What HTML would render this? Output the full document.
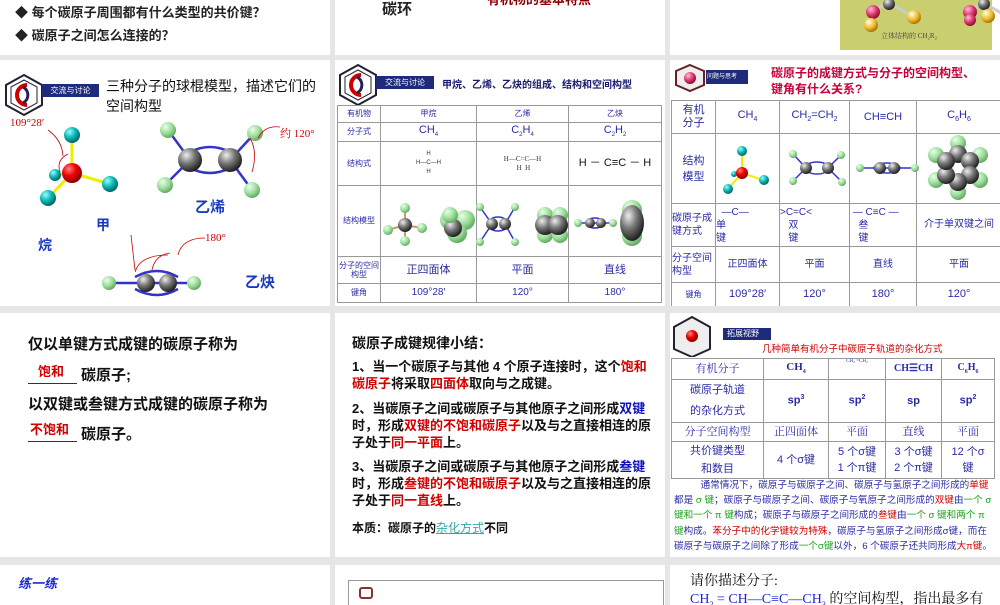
<!DOCTYPE html>
<html><head><meta charset="utf-8">
<style>
*{margin:0;padding:0;box-sizing:border-box}
body{width:1000px;height:600px;background:#e6e6e6;position:relative;overflow:hidden;font-family:"Liberation Sans","Noto Sans CJK SC",sans-serif;color:#111}
.p{position:absolute;background:#fff;overflow:hidden}
.a{position:absolute;white-space:nowrap}
.b{font-weight:bold}
table{border-collapse:collapse;position:absolute;table-layout:fixed}
td{border:1px solid #999;text-align:center;vertical-align:middle;color:#2a2aa8;overflow:hidden;line-height:1.15}
.r{color:#d00000}.bl{color:#1010c0}.g{color:#18a018}
svg{position:absolute;left:0;top:0}
</style></head><body>
<svg width="0" height="0" style="position:absolute">
<defs>
<radialGradient id="gG" cx=".35" cy=".3" r=".7"><stop offset="0" stop-color="#eee"/><stop offset=".5" stop-color="#777"/><stop offset="1" stop-color="#222"/></radialGradient>
<radialGradient id="gR" cx=".35" cy=".3" r=".7"><stop offset="0" stop-color="#ff8080"/><stop offset=".5" stop-color="#e00"/><stop offset="1" stop-color="#800"/></radialGradient>
<radialGradient id="gT" cx=".35" cy=".3" r=".7"><stop offset="0" stop-color="#9ff"/><stop offset=".5" stop-color="#1bb"/><stop offset="1" stop-color="#066"/></radialGradient>
<radialGradient id="gL" cx=".35" cy=".3" r=".7"><stop offset="0" stop-color="#e8ffe8"/><stop offset=".6" stop-color="#9d9"/><stop offset="1" stop-color="#6a6"/></radialGradient>
<radialGradient id="gY" cx=".35" cy=".3" r=".7"><stop offset="0" stop-color="#ffd"/><stop offset=".6" stop-color="#eb3"/><stop offset="1" stop-color="#a70"/></radialGradient>
<radialGradient id="gP" cx=".35" cy=".3" r=".7"><stop offset="0" stop-color="#fbd"/><stop offset=".6" stop-color="#d36"/><stop offset="1" stop-color="#813"/></radialGradient>
</defs></svg>

<!-- Row 1 -->
<div class="p" style="left:0;top:0;width:330px;height:55px">
<div class="a b" style="left:15px;top:2px;font-size:13px;color:#222">◆ 每个碳原子周围都有什么类型的共价键？</div>
<div class="a b" style="left:15px;top:25px;font-size:13px;color:#222">◆ 碳原子之间怎么连接的？</div>
</div>
<div class="p" style="left:335px;top:0;width:330px;height:55px">
<div class="a b" style="left:47px;top:-2px;font-size:15px;color:#222">碳环</div>
<div class="a b" style="left:152px;top:-11px;font-size:13px;color:#8b0000">有机物的基本特点</div>
</div>
<div class="p" style="left:670px;top:0;width:330px;height:55px">
<div class="a" style="left:170px;top:0;width:152px;height:50px;background:#c9cf6e"></div>
<svg width="330" height="55">
<line x1="203" y1="10" x2="219" y2="3" stroke="#ccc" stroke-width="3"/><line x1="219" y1="3" x2="244" y2="17" stroke="#ccc" stroke-width="3"/>
<line x1="300" y1="10" x2="314" y2="3" stroke="#ccc" stroke-width="3"/><line x1="314" y1="3" x2="338" y2="17" stroke="#ccc" stroke-width="3"/>
<circle cx="203" cy="12" r="7" fill="url(#gP)"/><circle cx="201" cy="25" r="7" fill="url(#gY)"/><circle cx="219" cy="4" r="6" fill="url(#gG)"/><circle cx="244" cy="17" r="7" fill="url(#gY)"/>
<circle cx="300" cy="12" r="7" fill="url(#gP)"/><circle cx="300" cy="20" r="6" fill="url(#gP)"/><circle cx="314" cy="4" r="6" fill="url(#gG)"/><circle cx="318" cy="16" r="7" fill="url(#gY)"/>
</svg>
<div class="a" style="left:211px;top:31px;font-size:7px;color:#444;font-family:'Liberation Serif','Noto Serif CJK SC',serif">立体结构的 CH₂R₂</div>
</div>

<!-- Row 2 -->
<div class="p" style="left:0;top:60px;width:330px;height:246px">
<svg width="42" height="44" style="left:3px;top:13px"><polygon points="21,2 39,12 39,32 21,42 3,32 3,12" fill="#fff" stroke="#223" stroke-width="2"/><polygon points="21,7 34,14 34,30 21,37 8,30 8,14" fill="none" stroke="#223" stroke-width="1"/><path d="M24 12 A10 10 0 1 0 24 32" fill="none" stroke="#c00" stroke-width="4"/><path d="M20 14 A9 9 0 0 1 20 30" fill="none" stroke="#225" stroke-width="3"/></svg>
<div class="a" style="left:42px;top:24px;width:57px;height:13px;background:#1e2a7a;color:#fff;font-size:8px;text-align:center;line-height:13px">交流与讨论</div>
<div class="a" style="left:106px;top:16px;font-size:14px;line-height:20px;color:#111;white-space:normal;width:222px">三种分子的球棍模型，描述它们的空间构型</div>
<svg width="330" height="246">
<g stroke="#ee0" stroke-width="3"><line x1="72" y1="113" x2="72" y2="75"/><line x1="72" y1="113" x2="110" y2="124"/><line x1="72" y1="113" x2="48" y2="138"/><line x1="72" y1="113" x2="55" y2="115"/></g>
<circle cx="55" cy="115" r="6" fill="url(#gT)"/><circle cx="72" cy="75" r="8" fill="url(#gT)"/><circle cx="110" cy="124" r="8" fill="url(#gT)"/><circle cx="48" cy="138" r="8" fill="url(#gT)"/><circle cx="72" cy="113" r="10" fill="url(#gR)"/>
<path d="M48 70 Q62 80 63 96" fill="none" stroke="#c00" stroke-width=".8"/><path d="M60 112 Q56 100 68 94" fill="none" stroke="#c00" stroke-width=".8"/>
<g stroke="#33c" stroke-width="2.5" fill="none"><line x1="168" y1="70" x2="190" y2="100"/><line x1="255" y1="73" x2="230" y2="100"/><line x1="165" y1="125" x2="190" y2="100"/><line x1="252" y1="130" x2="230" y2="100"/><path d="M190 92 Q210 82 230 92"/><path d="M190 108 Q210 118 230 108"/></g>
<circle cx="168" cy="70" r="8" fill="url(#gL)"/><circle cx="255" cy="73" r="8" fill="url(#gL)"/><circle cx="165" cy="125" r="8" fill="url(#gL)"/><circle cx="252" cy="130" r="8" fill="url(#gL)"/>
<circle cx="190" cy="100" r="12" fill="url(#gG)"/><circle cx="230" cy="100" r="12" fill="url(#gG)"/>
<path d="M250 78 Q258 92 252 112" fill="none" stroke="#c00" stroke-width=".8"/><path d="M258 78 Q265 65 280 67" fill="none" stroke="#c00" stroke-width=".8"/>
<g stroke="#33c" stroke-width="2.5" fill="none"><line x1="109" y1="223" x2="194" y2="223"/><path d="M135 217 Q157 205 178 217"/><path d="M135 229 Q157 241 178 229"/></g>
<circle cx="109" cy="223" r="7" fill="url(#gL)"/><circle cx="194" cy="223" r="7" fill="url(#gL)"/><circle cx="146" cy="223" r="9" fill="url(#gG)"/><circle cx="168" cy="223" r="9" fill="url(#gG)"/>
<path d="M131 175 L135 210" stroke="#c00" stroke-width=".8" fill="none"/><path d="M135 212 Q140 195 168 195 M152 210 Q155 195 170 193" stroke="#c00" stroke-width=".8" fill="none"/><path d="M178 195 Q182 178 205 178" stroke="#c00" stroke-width=".8" fill="none"/>
</svg>
<div class="a" style="left:10px;top:57px;font-size:11px;color:#c00;font-family:'Liberation Serif',serif">109°28′</div>
<div class="a" style="left:280px;top:65px;font-size:11px;color:#c00;font-family:'Liberation Serif','Noto Serif CJK SC',serif">约 120°</div>
<div class="a" style="left:205px;top:172px;font-size:11px;color:#c00;font-family:'Liberation Serif',serif">180°</div>
<div class="a b" style="left:195px;top:136px;font-size:15px;color:#1a3ac0">乙烯</div>
<div class="a b" style="left:96px;top:155px;font-size:14px;color:#1a3ac0">甲</div>
<div class="a b" style="left:38px;top:175px;font-size:14px;color:#1a3ac0">烷</div>
<div class="a b" style="left:245px;top:211px;font-size:15px;color:#1a3ac0">乙炔</div>
</div>

<div class="p" style="left:335px;top:60px;width:330px;height:246px">
<svg width="42" height="44" style="left:2px;top:3px"><polygon points="21,2 39,12 39,32 21,42 3,32 3,12" fill="#fff" stroke="#223" stroke-width="2"/><polygon points="21,7 34,14 34,30 21,37 8,30 8,14" fill="none" stroke="#223" stroke-width="1"/><path d="M24 12 A10 10 0 1 0 24 32" fill="none" stroke="#c00" stroke-width="4"/><path d="M20 14 A9 9 0 0 1 20 30" fill="none" stroke="#225" stroke-width="3"/></svg>
<div class="a" style="left:41px;top:16px;width:58px;height:13px;background:#1e2a7a;color:#fff;font-size:8px;text-align:center;line-height:13px">交流与讨论</div>
<div class="a b" style="left:107px;top:16px;font-size:10px;color:#1a1a6e">甲烷、乙烯、乙炔的组成、结构和空间构型</div>
<table style="left:2px;top:45px;width:324px;height:197px;font-size:8px">
<colgroup><col style="width:43px"><col style="width:96px"><col style="width:92px"><col style="width:93px"></colgroup>
<tr style="height:17px"><td>有机物</td><td>甲烷</td><td>乙烯</td><td>乙炔</td></tr>
<tr style="height:19px;font-size:11px"><td style="font-size:8px">分子式</td><td>CH<sub style="font-size:6px">4</sub></td><td>C<sub style="font-size:6px">2</sub>H<sub style="font-size:6px">4</sub></td><td>C<sub style="font-size:6px">2</sub>H<sub style="font-size:6px">2</sub></td></tr>
<tr style="height:44px"><td>结构式</td><td style="color:#333;font-size:6px;line-height:9px">H<br>H—C—H<br>H</td><td style="color:#333;font-size:7px;font-family:'Liberation Serif',serif">H—C=C—H<br>&nbsp;H&nbsp;&nbsp;H</td><td style="color:#111;font-size:11px">H － C≡C － H</td></tr>
<tr style="height:71px"><td>结构模型</td><td></td><td></td><td></td></tr>
<tr style="height:27px;font-size:11px"><td style="font-size:8px">分子的空间构型</td><td>正四面体</td><td>平面</td><td>直线</td></tr>
<tr style="height:19px;font-size:10px"><td style="font-size:8px">键角</td><td>109°28′</td><td>120°</td><td>180°</td></tr>
</table>
<svg width="330" height="246">
<g stroke="#c96" stroke-width="2"><line x1="70" y1="165" x2="70" y2="148"/><line x1="70" y1="165" x2="53" y2="170"/><line x1="70" y1="165" x2="87" y2="168"/><line x1="70" y1="165" x2="70" y2="180"/></g>
<circle cx="70" cy="148" r="5" fill="url(#gL)"/><circle cx="53" cy="170" r="5" fill="url(#gL)"/><circle cx="87" cy="168" r="5" fill="url(#gL)"/><circle cx="70" cy="181" r="5" fill="url(#gL)"/><circle cx="70" cy="165" r="7" fill="url(#gG)"/>
<circle cx="115" cy="160" r="10" fill="url(#gL)"/><circle cx="130" cy="160" r="10" fill="url(#gL)"/><circle cx="122" cy="173" r="10" fill="url(#gL)"/><circle cx="118" cy="168" r="9" fill="url(#gG)"/><circle cx="115" cy="155" r="8" fill="url(#gL)"/>
<g stroke="#33c" stroke-width="1.5" fill="none"><line x1="145" y1="147" x2="157" y2="164"/><line x1="180" y1="147" x2="170" y2="164"/><line x1="145" y1="182" x2="157" y2="164"/><line x1="180" y1="182" x2="170" y2="164"/><ellipse cx="163" cy="164" rx="10" ry="7"/></g>
<circle cx="145" cy="147" r="4" fill="url(#gL)"/><circle cx="180" cy="147" r="4" fill="url(#gL)"/><circle cx="145" cy="182" r="4" fill="url(#gL)"/><circle cx="180" cy="182" r="4" fill="url(#gL)"/><circle cx="157" cy="164" r="6" fill="url(#gG)"/><circle cx="170" cy="164" r="6" fill="url(#gG)"/>
<circle cx="210" cy="155" r="8" fill="url(#gL)"/><circle cx="225" cy="155" r="8" fill="url(#gL)"/><circle cx="210" cy="175" r="8" fill="url(#gL)"/><circle cx="225" cy="175" r="8" fill="url(#gL)"/><circle cx="210" cy="165" r="10" fill="url(#gG)"/><circle cx="223" cy="165" r="10" fill="url(#gG)"/>
<g stroke="#33c" stroke-width="1.5" fill="none"><line x1="243" y1="163" x2="278" y2="163"/><ellipse cx="260" cy="163" rx="9" ry="5"/></g>
<circle cx="243" cy="163" r="4" fill="url(#gL)"/><circle cx="278" cy="163" r="4" fill="url(#gL)"/><circle cx="255" cy="163" r="5" fill="url(#gG)"/><circle cx="266" cy="163" r="5" fill="url(#gG)"/>
<circle cx="297" cy="150" r="10" fill="url(#gL)"/><circle cx="297" cy="176" r="10" fill="url(#gL)"/><ellipse cx="297" cy="163" rx="12" ry="18" fill="url(#gG)"/>
</svg>
</div>

<div class="p" style="left:670px;top:60px;width:330px;height:246px">
<svg width="80" height="30" style="left:2px;top:3px"><polygon points="18,2 32,8 32,22 18,28 4,22 4,8" fill="#eee" stroke="#622" stroke-width="2"/><circle cx="18" cy="15" r="6" fill="url(#gP)"/><rect x="34" y="7" width="42" height="14" fill="#1e2a7a"/></svg>
<div class="a" style="left:37px;top:11px;font-size:6px;color:#fff">问题与思考</div>
<div class="a b" style="left:101px;top:5px;font-size:12px;line-height:16px;color:#c8003a">碳原子的成键方式与分子的空间构型、<br>键角有什么关系?</div>
<table style="left:1px;top:40px;width:330px;height:206px;font-size:11px">
<colgroup><col style="width:44px"><col style="width:64px"><col style="width:70px"><col style="width:67px"><col style="width:85px"></colgroup>
<tr style="height:33px"><td style="font-size:11px">有机<br>分子</td><td>CH<sub style="font-size:7px">4</sub></td><td>CH<sub style="font-size:7px">2</sub>=CH<sub style="font-size:7px">2</sub></td><td>CH≡CH</td><td>C<sub style="font-size:7px">6</sub>H<sub style="font-size:7px">6</sub></td></tr>
<tr style="height:70px"><td style="font-size:11px;line-height:16px">结构<br>模型</td><td></td><td></td><td></td><td></td></tr>
<tr style="height:43px"><td style="font-size:10px;text-align:left;line-height:13px">碳原子成键方式</td><td style="font-size:10px;text-align:left;line-height:13px">&nbsp;&nbsp;—C—<br>单<br>键</td><td style="font-size:10px;text-align:left;line-height:13px">&gt;C=C&lt;<br>&nbsp;&nbsp;&nbsp;双<br>&nbsp;&nbsp;&nbsp;键</td><td style="font-size:10px;text-align:left;line-height:13px">&nbsp;— C≡C —<br>&nbsp;&nbsp;&nbsp;叁<br>&nbsp;&nbsp;&nbsp;键</td><td style="font-size:10px">介于单双键之间</td></tr>
<tr style="height:36px;font-size:10px"><td style="text-align:left;line-height:13px">分子空间构型</td><td>正四面体</td><td>平面</td><td>直线</td><td>平面</td></tr>
<tr style="height:24px;font-size:11px"><td style="font-size:8px">键角</td><td>109°28′</td><td>120°</td><td>180°</td><td>120°</td></tr>
</table>
<svg width="330" height="246">
<g stroke="#ee0" stroke-width="2"><line x1="72" y1="113" x2="72" y2="92"/><line x1="72" y1="113" x2="93" y2="120"/><line x1="72" y1="113" x2="58" y2="129"/></g>
<circle cx="72" cy="91" r="5" fill="url(#gT)"/><circle cx="94" cy="120" r="5" fill="url(#gT)"/><circle cx="58" cy="129" r="5" fill="url(#gT)"/><circle cx="64" cy="114" r="3" fill="url(#gT)"/><circle cx="72" cy="113" r="6" fill="url(#gR)"/>
<g stroke="#33c" stroke-width="1.5" fill="none"><line x1="123" y1="94" x2="136" y2="108"/><line x1="171" y1="95" x2="158" y2="108"/><line x1="123" y1="121" x2="136" y2="108"/><line x1="172" y1="122" x2="158" y2="108"/><ellipse cx="147" cy="108" rx="12" ry="6"/></g>
<circle cx="123" cy="94" r="4" fill="url(#gL)"/><circle cx="171" cy="95" r="4" fill="url(#gL)"/><circle cx="123" cy="121" r="4" fill="url(#gL)"/><circle cx="172" cy="122" r="4" fill="url(#gL)"/><circle cx="136" cy="108" r="6" fill="url(#gG)"/><circle cx="158" cy="108" r="6" fill="url(#gG)"/>
<g stroke="#33c" stroke-width="1.5" fill="none"><line x1="190" y1="108" x2="245" y2="108"/><ellipse cx="217" cy="108" rx="13" ry="5"/></g>
<circle cx="190" cy="108" r="4" fill="url(#gL)"/><circle cx="245" cy="108" r="4" fill="url(#gL)"/><circle cx="210" cy="108" r="6" fill="url(#gG)"/><circle cx="224" cy="108" r="6" fill="url(#gG)"/>
<g fill="url(#gL)"><circle cx="288" cy="83" r="8"/><circle cx="310" cy="95" r="8"/><circle cx="310" cy="120" r="8"/><circle cx="288" cy="132" r="8"/><circle cx="266" cy="120" r="8"/><circle cx="266" cy="95" r="8"/></g>
<g fill="url(#gG)"><circle cx="288" cy="94" r="9"/><circle cx="300" cy="101" r="9"/><circle cx="300" cy="115" r="9"/><circle cx="288" cy="122" r="9"/><circle cx="276" cy="115" r="9"/><circle cx="276" cy="101" r="9"/></g>
</svg>
</div>

<!-- Row 3 -->
<div class="p" style="left:0;top:313px;width:330px;height:244px">
<div class="a b" style="left:28px;top:20px;font-size:15px">仅以单键方式成键的碳原子称为</div>
<div class="a b r" style="left:38px;top:48px;font-size:13px">饱和</div>
<div class="a" style="left:28px;top:70px;width:49px;border-top:1px solid #333"></div>
<div class="a b" style="left:81px;top:51px;font-size:15px">碳原子;</div>
<div class="a b" style="left:28px;top:80px;font-size:15px">以双键或叁键方式成键的碳原子称为</div>
<div class="a b r" style="left:30px;top:106px;font-size:13px">不饱和</div>
<div class="a" style="left:28px;top:128px;width:49px;border-top:1px solid #333"></div>
<div class="a b" style="left:81px;top:110px;font-size:15px">碳原子。</div>
</div>

<div class="p" style="left:335px;top:313px;width:330px;height:244px">
<div class="a b" style="left:17px;top:20px;font-size:14px">碳原子成键规律小结：</div>
<div class="a b" style="left:17px;top:45px;width:306px;white-space:normal;font-size:13px;line-height:17px">1、当一个碳原子与其他 4 个原子连接时，这个<span class="r">饱和碳原子</span>将采取<span class="r">四面体</span>取向与之成键。</div>
<div class="a b" style="left:17px;top:87px;width:306px;white-space:normal;font-size:13px;line-height:17px">2、当碳原子之间或碳原子与其他原子之间形成<span class="bl">双键</span>时，形成<span class="r">双键的不饱和碳原子</span>以及与之直接相连的原子处于<span class="r">同一平面</span>上。</div>
<div class="a b" style="left:17px;top:145px;width:306px;white-space:normal;font-size:13px;line-height:17px">3、当碳原子之间或碳原子与其他原子之间形成<span class="bl">叁键</span>时，形成<span class="r">叁键的不饱和碳原子</span>以及与之直接相连的原子处于<span class="r">同一直线</span>上。</div>
<div class="a b" style="left:17px;top:206px;font-size:12px">本质：碳原子的<span style="color:#3aa;text-decoration:underline;font-weight:normal">杂化方式</span>不同</div>
</div>

<div class="p" style="left:670px;top:313px;width:330px;height:244px">
<svg width="100" height="42" style="left:2px;top:2px"><polygon points="20,2 38,12 38,34 20,42 2,34 2,12" fill="#eee" stroke="#223" stroke-width="2"/><circle cx="20" cy="21" r="6" fill="url(#gR)"/><rect x="51" y="13" width="48" height="12" fill="#1e2a7a"/></svg>
<div class="a" style="left:57px;top:15px;font-size:8px;color:#fff">拓展视野</div>
<div class="a" style="left:92px;top:28px;font-size:9.5px;color:#d00000">几种简单有机分子中碳原子轨道的杂化方式</div>
<table style="left:1px;top:45px;width:323px;height:118px;font-size:11px;font-family:'Liberation Serif','Noto Serif CJK SC',serif">
<colgroup><col style="width:92px"><col style="width:65px"><col style="width:57px"><col style="width:56px"><col style="width:53px"></colgroup>
<tr style="height:21px"><td style="color:#2a2aa8">有机分子</td><td class="b">CH<sub style="font-size:6px">4</sub></td><td style="font-size:5px;vertical-align:top">CH₂ =CH₂</td><td class="b" style="font-size:10px">CH☰CH</td><td class="b" style="font-size:10px">C<sub style="font-size:6px">6</sub>H<sub style="font-size:6px">6</sub></td></tr>
<tr style="height:42px;font-family:'Liberation Sans','Noto Sans CJK SC',sans-serif"><td style="font-size:11px;line-height:21px">碳原子轨道<br>的杂化方式</td><td class="b">sp<sup style="font-size:7px">3</sup></td><td class="b">sp<sup style="font-size:7px">2</sup></td><td class="b">sp</td><td class="b">sp<sup style="font-size:7px">2</sup></td></tr>
<tr style="height:19px"><td>分子空间构型</td><td>正四面体</td><td>平面</td><td>直线</td><td>平面</td></tr>
<tr style="height:36px;font-family:'Liberation Sans','Noto Sans CJK SC',sans-serif"><td style="line-height:18px">共价键类型<br>和数目</td><td>4 个σ键</td><td style="line-height:16px">5 个σ键<br>1 个π键</td><td style="line-height:16px">3 个σ键<br>2 个π键</td><td style="line-height:16px">12 个σ<br>键</td></tr>
</table>
<div class="a" style="left:4px;top:165px;width:322px;white-space:normal;font-size:9.6px;line-height:15.2px;color:#2a2aa8">&nbsp;&nbsp;&nbsp;&nbsp;&nbsp;&nbsp;&nbsp;&nbsp;&nbsp;&nbsp;通常情况下，碳原子与碳原子之间、碳原子与氢原子之间形成的<span class="r">单键</span>都是 <span class="g">σ 键</span>；碳原子与碳原子之间、碳原子与氧原子之间形成的<span class="r">双键</span>由<span class="g">一个 σ 键和一个 π 键</span>构成；碳原子与碳原子之间形成的<span class="r">叁键</span>由<span class="g">一个 σ 键和两个 π 键</span>构成。<span class="r">苯分子中的化学键较为特殊</span>，碳原子与氢原子之间形成σ键，而在碳原子与碳原子之间除了形成<span class="g">一个σ键</span>以外，6 个碳原子还共同形成<span class="r">大π键</span>。</div>
</div>

<!-- Row 4 -->
<div class="p" style="left:0;top:565px;width:330px;height:40px">
<div class="a b" style="left:18px;top:8px;font-size:13px;font-style:italic;color:#1a2ad0">练一练</div>
</div>
<div class="p" style="left:335px;top:565px;width:330px;height:40px">
<div class="a" style="left:13px;top:15px;width:316px;height:30px;border:1px solid #999"></div>
<div class="a" style="left:24px;top:22px;width:14px;height:12px;border:2px solid #833;border-radius:3px"></div>
</div>
<div class="p" style="left:670px;top:565px;width:330px;height:40px">
<div class="a" style="left:20px;top:5px;font-size:14px;color:#111;font-family:'Liberation Serif','Noto Serif CJK SC',serif">请你描述分子:</div>
<div class="a" style="left:20px;top:23px;font-size:14px;color:#111;font-family:'Liberation Serif','Noto Serif CJK SC',serif"><span style="color:#1a2ad0">CH<sub style="font-size:8px">2</sub> = CH—C≡C—CH<sub style="font-size:8px">3</sub></span> 的空间构型，指出最多有</div>
</div>
</body></html>
